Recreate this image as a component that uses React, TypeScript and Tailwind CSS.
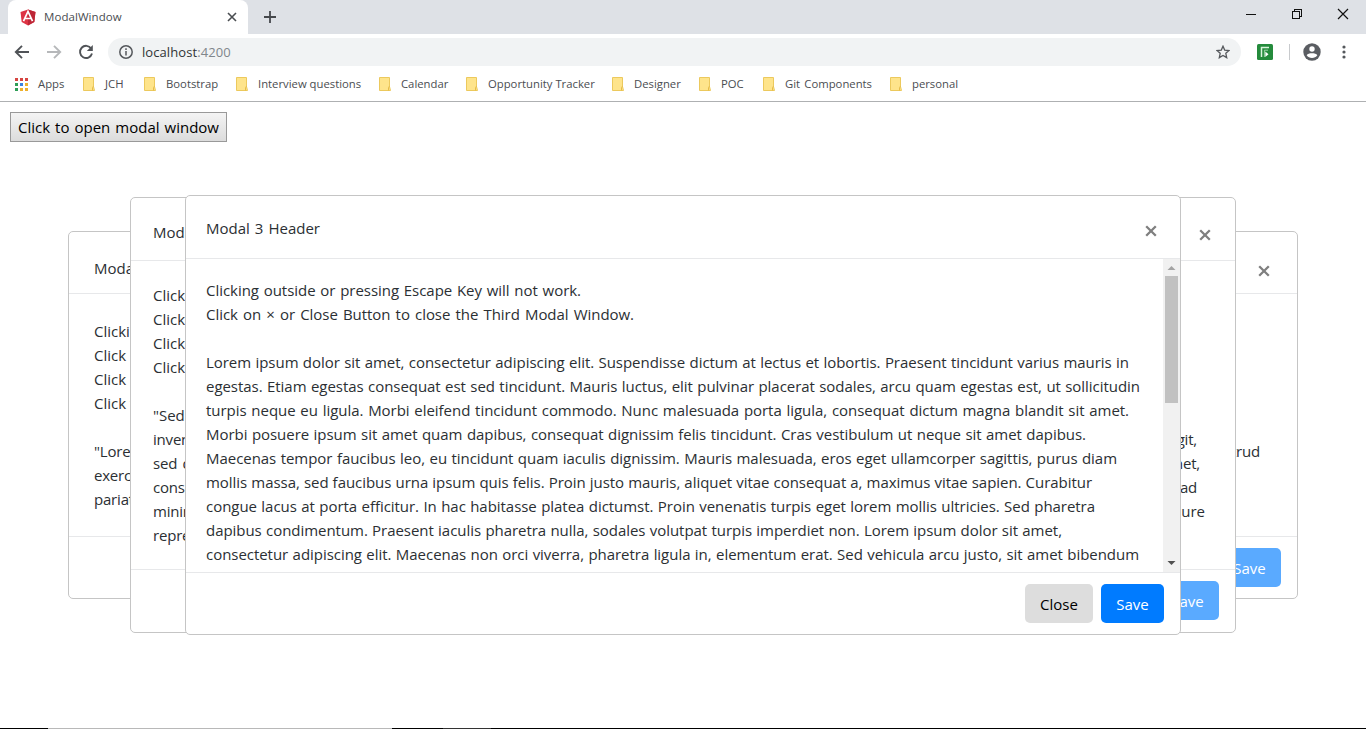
import React from "react";

const bookmarks = [
  { label: "JCH", box: "w-[61px]", text: "w-[20px]" },
  { label: "Bootstrap", box: "w-[92px]", text: "w-[51px]" },
  { label: "Interview questions", box: "w-[143px]", text: "w-[103px]" },
  { label: "Calendar", box: "w-[87px]", text: "w-[47px]" },
  { label: "Opportunity Tracker", box: "w-[146px]", text: "w-[106px]" },
  { label: "Designer", box: "w-[87px]", text: "w-[47px]" },
  { label: "POC", box: "w-[64px]", text: "w-[23px]" },
  { label: "Git Components", box: "w-[127px]", text: "w-[87px]" },
  { label: "personal", box: "w-[70px]", text: "w-[46px]" },
];

const appDots = [
  "bg-[#d64541]", "bg-[#d64541]", "bg-[#d64541]",
  "bg-[#2e9e57]", "bg-[#3b82e0]", "bg-[#eeb02c]",
  "bg-[#2e9e57]", "bg-[#eeb02c]", "bg-[#eeb02c]",
];

function Line({ w, children }: { w: string; children?: React.ReactNode }) {
  return <p className={`h-6 whitespace-nowrap [text-align-last:justify] ${w}`}>{children}</p>;
}

function Cross({ className }: { className: string }) {
  return (
    <svg className={className} width="12" height="12" viewBox="0 0 12 12" fill="none" stroke="#7f7f7f" strokeWidth="2.3">
      <path d="M1.2 1.2 10.8 10.8M10.8 1.2 1.2 10.8" />
    </svg>
  );
}

function Folder() {
  return (
    <svg width="12" height="14" viewBox="0 0 12 14" className="shrink-0">
      <path d="M.5 .5H10.5V9.5L11.5 13.5H.5Z" fill="#fee48b" stroke="#ecc95d" />
      <path d="M9.5 13.5V11L10.5 9" fill="none" stroke="#e6bd4a" />
    </svg>
  );
}

function Browser() {
  return (
    <header className="text-[#4a4d51]">
      <div className="flex h-[34px] bg-[#dee1e6]">
        <div className="ml-2 flex w-[240px] items-center rounded-t-lg bg-white pl-3 pr-[11px]">
          <svg width="16" height="17" viewBox="0 0 16 17">
            <path d="M8 .5 15.5 3 14.3 13 8 16.5 1.7 13 .5 3Z" fill="#dd3344" />
            <path d="M8 .5 15.5 3 14.3 13 8 16.5Z" fill="#bd2636" />
            <path d="M3.5 12.2 8 2.5 12.5 12.2M5.4 9.5H10.6" fill="none" stroke="#fff" strokeWidth="1.7" />
          </svg>
          <span className="ml-2 text-[11.5px] tracking-[0.06px]">ModalWindow</span>
          <svg className="ml-auto" width="10" height="10" viewBox="0 0 10 10" stroke="#4a4d51" strokeWidth="1.6">
            <path d="M1 1 9 9M9 1 1 9" />
          </svg>
        </div>
        <svg className="ml-4 mt-[11px]" width="12" height="12" viewBox="0 0 12 12" stroke="#45484c" strokeWidth="1.8">
          <path d="M6 0V12M0 6H12" />
        </svg>
        <div className="ml-auto mr-[17px] mt-2 flex gap-[34px]">
          <svg width="12" height="12" viewBox="0 0 12 12" stroke="#111"><path d="M1 6.5H11" /></svg>
          <svg width="12" height="12" viewBox="0 0 12 12" fill="none" stroke="#111" shapeRendering="crispEdges">
            <path d="M1.5 3.5H8.5V10.5H1.5ZM3.5 3V1.5H10.5V8.5H9" />
          </svg>
          <svg width="12" height="12" viewBox="0 0 12 12" stroke="#111" strokeWidth="1.2"><path d="M1 1 11 11M11 1 1 11" /></svg>
        </div>
      </div>
      <div className="flex h-9 items-center">
        <svg className="ml-3.5 shrink-0" width="16" height="16" viewBox="0 0 16 16" fill="none" stroke="#505357" strokeWidth="1.9">
          <path d="M15 8H2M8 1.8 1.8 8 8 14.2" />
        </svg>
        <svg className="ml-4 shrink-0" width="16" height="16" viewBox="0 0 16 16" fill="none" stroke="#b6b8ba" strokeWidth="1.9">
          <path d="M1 8H14M8 1.8 14.2 8 8 14.2" />
        </svg>
        <svg className="ml-4 shrink-0" width="16" height="16" viewBox="0 0 16 16" fill="none">
          <path d="M13.2 4.5A6.1 6.1 0 1 0 14 9.6" stroke="#505357" strokeWidth="1.9" />
          <path d="M14.8 1V7H8.8Z" fill="#505357" />
        </svg>
        <div className="ml-3.5 flex h-7 w-[1133px] items-center rounded-full bg-[#f1f3f4] pl-[11px] pr-[11px]">
          <svg width="14" height="14" viewBox="0 0 14 14" fill="none" stroke="#55585c" strokeWidth="1.5">
            <circle cx="7" cy="7" r="6.2" /><path d="M7 6V10.5M7 3.3V4.9" />
          </svg>
          <span className="ml-[9px] pt-px text-[13px] tracking-[0.08px] text-[#303336]">localhost<span className="text-[#80868b]">:4200</span></span>
          <svg className="ml-auto" width="14" height="14" viewBox="0 0 14 14" fill="none" stroke="#55585c" strokeWidth="1.3">
            <path d="M7 1.2 8.7 5.1 13 5.5 9.8 8.3 10.7 12.6 7 10.4 3.3 12.6 4.2 8.3 1 5.5 5.3 5.1Z" />
          </svg>
        </div>
        <svg className="ml-4 shrink-0" width="16" height="16" viewBox="0 0 16 16">
          <rect width="16" height="16" rx="1.5" fill="#248b3c" />
          <path d="M4.5 13V3.5H12" fill="none" stroke="#d9f4dc" strokeWidth="1.5" />
          <path d="M7.4 13V6.2H11" fill="none" stroke="#b8e3be" strokeWidth=".8" />
          <path d="M8.3 7.5 11.5 10.2 8.3 13Z" fill="#fff" />
        </svg>
        <i className="ml-4 h-4 w-px bg-[#c8cacd]" />
        <svg className="ml-[13px] shrink-0" width="18" height="18" viewBox="0 0 18 18">
          <circle cx="9" cy="9" r="8.7" fill="#5a5d62" />
          <circle cx="9" cy="6" r="2.7" fill="#fff" />
          <path d="M3.7 12.2C5 9.7 13 9.7 14.3 12.2 12 15.8 6 15.8 3.7 12.2Z" fill="#fff" />
        </svg>
        <svg className="ml-[21px] shrink-0" width="4" height="14" viewBox="0 0 4 14" fill="#55585c">
          <circle cx="2" cy="2" r="1.6" /><circle cx="2" cy="7" r="1.6" /><circle cx="2" cy="12" r="1.6" />
        </svg>
      </div>
      <div className="flex h-8 items-center border-b border-[#aeb0b2] pb-[3px] pl-[15px] text-[11.3px]">
        <div className="grid w-[13px] grid-cols-3 gap-[2px]">
          {appDots.map((c, i) => <i key={i} className={`size-[3px] ${c}`} />)}
        </div>
        <span className="ml-2.5 w-[45px]">Apps</span>
        {bookmarks.map((b) => (
          <div key={b.label} className={`flex shrink-0 items-center gap-2.5 ${b.box}`}>
            <Folder />
            <span className={`whitespace-nowrap [text-align-last:justify] ${b.text}`}>{b.label}</span>
          </div>
        ))}
      </div>
    </header>
  );
}

const saveFaded = "flex h-[39px] w-[63px] items-center justify-center rounded-[5px] bg-[#5aaaff] text-white";

export default function App() {
  return (
    <div className="relative flex h-[729px] w-[1366px] flex-col overflow-hidden bg-white font-['Open_Sans','Noto_Sans',sans-serif]">
      <Browser />
      <main className="grow pl-2.5 pt-2.5 text-[15px] leading-6 text-[#2b2f33]">
        <button className="h-[30px] w-[217px] whitespace-nowrap border border-[#999] bg-linear-to-b from-[#f4f4f4] to-[#dcdcdc] px-[7px] pb-px text-black [text-align-last:justify]">
          Click to open modal window
        </button>

        <section className="absolute left-[68px] top-[231px] flex h-[368px] w-[1230px] flex-col rounded-[5px] border border-[#c5c5c5] bg-white">
          <div className="flex h-[62px] shrink-0 items-start justify-between border-b border-[#e7e8ea] pl-[25px] pr-[27px] pt-6">
            <span>Modal 1 Header</span>
            <Cross className="mt-[9px]" />
          </div>
          <div className="grow pl-[25px] pt-[25px]">
            <p className="h-6">Clicking outside will close the modal.</p>
            <p className="h-6">Click on × or Close Button.</p>
            <p className="h-6">Click on Save Button.</p>
            <p className="h-6">Click to open the Second Modal Window.</p>
            <p className="h-6" />
            <Line w="w-[1166px] tracking-[-0.2px]">"Lorem ipsum dolor sit amet, consectetur adipiscing elit, sed do eiusmod tempor incididunt ut labore et dolore magna aliqua. Ut enim ad minim veniam, quis nostrud</Line>
            <p className="h-6 tracking-[-0.2px]">exercitation ullamco laboris nisi ut aliquip ex ea commodo consequat. Duis aute irure dolor in</p>
            <p className="h-6 tracking-[-0.2px]">pariatur. Excepteur sint occaecat cupidatat non proident.</p>
          </div>
          <div className="flex h-[62px] shrink-0 justify-end border-t border-[#e7e8ea] pr-4 pt-[11px]">
            <span className={saveFaded}>Save</span>
          </div>
        </section>

        <section className="absolute left-[130px] top-[197px] flex h-[436px] w-[1106px] flex-col rounded-[5px] border border-[#c5c5c5] bg-white">
          <div className="flex h-[63px] shrink-0 items-start justify-between border-b border-[#e7e8ea] pl-[22px] pr-6 pt-[22px]">
            <span>Modal 2 Header</span>
            <Cross className="mt-[9px]" />
          </div>
          <div className="grow pl-[22px] pt-[22px]">
            <p className="h-6">Clicking outside will not work.</p>
            <p className="h-6">Click on × or Close Button.</p>
            <p className="h-6">Click on Save Button.</p>
            <p className="h-6">Click to open the Third Modal Window.</p>
            <p className="h-6" />
            <p className="h-6 w-[1000px] overflow-hidden whitespace-nowrap">"Sed ut perspiciatis unde omnis iste natus error sit voluptatem accusantium doloremque laudantium, totam rem aperiam</p>
            <Line w="w-[1044px] tracking-[-0.2px]">inventore veritatis et quasi architecto beatae vitae dicta sunt explicabo. Nemo enim ipsam voluptatem quia voluptas sit aspernatur aut odit aut fugit,</Line>
            <Line w="w-[1047px] tracking-[-0.2px]">sed quia consequuntur magni dolores eos qui ratione voluptatem sequi nesciunt. Neque porro quisquam est, qui dolorem ipsum quia dolor sit amet,</Line>
            <Line w="w-[1044px] tracking-[-0.2px]">consectetur, adipisci velit, sed quia non numquam eius modi tempora incidunt ut labore et dolore magnam aliquam quaerat voluptatem. Ut enim ad</Line>
            <Line w="w-[1052px] tracking-[-0.2px]">minima veniam, quis nostrum exercitationem ullam corporis suscipit laboriosam, nisi ut aliquid ex ea commodi consequatur? Quis autem vel eum <span className="tracking-normal">iure</span></Line>
            <p className="h-6 tracking-[-0.2px]">reprehenderit qui in ea voluptate velit esse quam nihil molestiae consequatur.</p>
          </div>
          <div className="flex h-[63px] shrink-0 justify-end border-t border-[#e7e8ea] pr-4 pt-[11px]">
            <span className={saveFaded}>Save</span>
          </div>
        </section>

        <section className="absolute left-[185px] top-[195px] flex h-[440px] w-[996px] flex-col rounded-[5px] border border-[#c5c5c5] bg-white">
          <div className="flex h-[63px] shrink-0 items-start justify-between border-b border-[#e7e8ea] pl-5 pr-[23px] pt-5">
            <Line w="w-[114px]">Modal 3 Header</Line>
            <Cross className="mt-[9px]" />
          </div>
          <div className="flex min-h-0 grow">
            <div className="grow overflow-hidden pl-5 pt-[19px] tracking-[-0.04px]">
              <Line w="w-[375px]">Clicking outside or pressing Escape Key will not work.</Line>
              <Line w="w-[428px]">Click on × or Close Button to close the Third Modal Window.</Line>
              <p className="h-6" />
              <Line w="w-[923px]">Lorem ipsum dolor sit amet, consectetur adipiscing elit. Suspendisse dictum at lectus et lobortis. Praesent tincidunt varius mauris in</Line>
              <Line w="w-[934px]">egestas. Etiam egestas consequat est sed tincidunt. Mauris luctus, elit pulvinar placerat sodales, arcu quam egestas est, ut sollicitudin</Line>
              <Line w="w-[923px]">turpis neque eu ligula. Morbi eleifend tincidunt commodo. Nunc malesuada porta ligula, consequat dictum magna blandit sit amet.</Line>
              <Line w="w-[880px]">Morbi posuere ipsum sit amet quam dapibus, consequat dignissim felis tincidunt. Cras vestibulum ut neque sit amet dapibus.</Line>
              <Line w="w-[911px]">Maecenas tempor faucibus leo, eu tincidunt quam iaculis dignissim. Mauris malesuada, eros eget ullamcorper sagittis, purus diam</Line>
              <Line w="w-[886px]">mollis massa, sed faucibus urna ipsum quis felis. Proin justo mauris, aliquet vitae consequat a, maximus vitae sapien. Curabitur</Line>
              <Line w="w-[889px]">congue lacus at porta efficitur. In hac habitasse platea dictumst. Proin venenatis turpis eget lorem mollis ultricies. Sed pharetra</Line>
              <Line w="w-[856px]">dapibus condimentum. Praesent iaculis pharetra nulla, sodales volutpat turpis imperdiet non. Lorem ipsum dolor sit amet,</Line>
              <Line w="w-[933px]">consectetur adipiscing elit. Maecenas non orci viverra, pharetra ligula in, elementum erat. Sed vehicula arcu justo, sit amet bibendum</Line>
            </div>
            <div className="flex w-[17px] shrink-0 flex-col items-center bg-[#f1f1f1]">
              <svg width="17" height="17" viewBox="0 0 17 17" fill="#a3a3a3"><path d="M4.5 11H12.5L8.5 7Z" /></svg>
              <div className="h-[127px] w-[13px] bg-[#c1c1c1]" />
              <svg className="mt-auto" width="17" height="17" viewBox="0 0 17 17" fill="#505050"><path d="M4.5 6H12.5L8.5 10Z" /></svg>
            </div>
          </div>
          <div className="flex h-[62px] shrink-0 justify-end gap-2 border-t border-[#e7e8ea] pr-4 pt-[11px]">
            <button className="h-[39px] w-[68px] rounded-[5px] bg-[#ddd] text-black">Close</button>
            <button className="h-[39px] w-[63px] rounded-[5px] bg-[#007bff] text-white">Save</button>
          </div>
        </section>
      </main>
      <footer className="flex h-px shrink-0 bg-black">
        <i className="ml-12 w-[344px] bg-[#b8b8b8]" />
        <i className="ml-[51px] w-12 bg-[#333]" />
      </footer>
    </div>
  );
}
